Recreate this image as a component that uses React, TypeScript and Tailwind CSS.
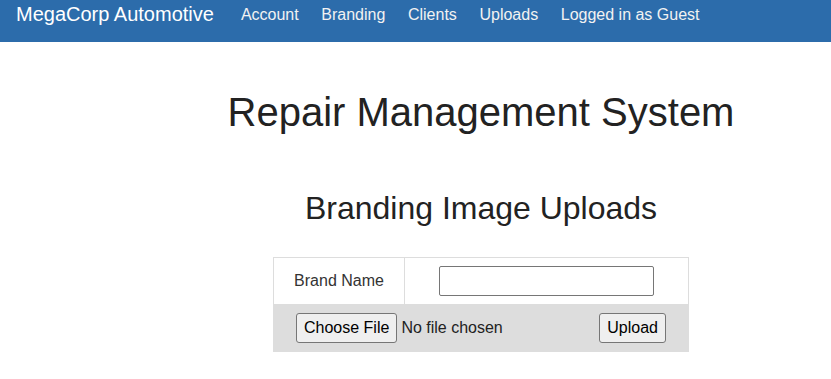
const navLinks = ["Account", "Branding", "Clients", "Uploads", "Logged in as Guest"];

const font = { fontFamily: '"Liberation Sans", Arial, sans-serif' };

export default function App() {
  return (
    <div className="min-h-screen bg-white text-[#222]" style={font}>
      {/* top navbar */}
      <nav className="flex h-[42px] items-start bg-[#2c6cab] text-white">
        <a className="ml-4 text-[20px] leading-[28px]" href="#">
          MegaCorp Automotive
        </a>
        <ul className="ml-[27px] flex gap-[22.6px] pt-[3px] text-[16px] leading-[24px] text-[#f2f2f2]">
          {navLinks.map((l) => (
            <li key={l}>
              <a href="#">{l}</a>
            </li>
          ))}
        </ul>
      </nav>

      <div className="flex">
        <div className="w-[131px] shrink-0" />
        <main className="flex flex-1 flex-col items-center pt-[48px]">
          <h1 className="text-[40px] leading-[44px]">Repair Management System</h1>
          <h2 className="mt-[57px] text-[32px] leading-[35px]">Branding Image Uploads</h2>

          <div className="mt-[31px] w-[416px] text-[16px]">
            <div className="flex h-[48px] border border-[#dddddd]">
              <div className="flex w-[131px] items-center justify-center border-r border-[#dddddd] text-[#333]">
                Brand Name
              </div>
              <div className="flex flex-1 items-center justify-center">
                <input
                  type="text"
                  className="h-[30px] w-[215px] rounded-[2px] border border-[#767676] bg-white px-1"
                />
              </div>
            </div>
            <div className="flex h-[47px] items-center bg-[#dddddd] pb-[1px] pl-[23px] pr-[23px] text-black">
              <button className="h-[30px] rounded-[3px] border border-[#767676] bg-[#efefef] px-[7px]">
                Choose File
              </button>
              <span className="ml-[4px] text-[#222]">No file chosen</span>
              <button className="ml-auto h-[30px] rounded-[3px] border border-[#767676] bg-[#efefef] px-[7px]">
                Upload
              </button>
            </div>
          </div>
        </main>
      </div>
    </div>
  );
}
